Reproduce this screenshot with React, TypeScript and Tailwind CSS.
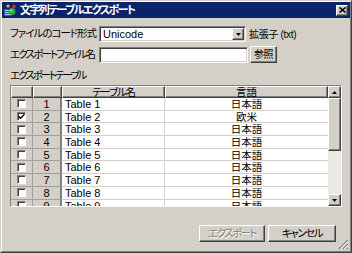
import React from "react";

const jp = "font-['Liberation_Sans','Noto_Sans_CJK_JP',sans-serif] [font-feature-settings:'palt']";

const raised =
  "border border-t-white border-l-white border-r-[#404040] border-b-[#404040] shadow-[inset_-1px_-1px_0_#808080] bg-[#d4d0c8]";
const sunken =
  "border border-t-[#808080] border-l-[#808080] border-r-white border-b-white shadow-[inset_1px_1px_0_#404040,inset_-1px_-1px_0_#d4d0c8]";

const ROWS = [
  { name: "Table 1", lang: "日本語", checked: false },
  { name: "Table 2", lang: "欧米", checked: true },
  { name: "Table 3", lang: "日本語", checked: false },
  { name: "Table 4", lang: "日本語", checked: false },
  { name: "Table 5", lang: "日本語", checked: false },
  { name: "Table 6", lang: "日本語", checked: false },
  { name: "Table 7", lang: "日本語", checked: false },
  { name: "Table 8", lang: "日本語", checked: false },
  { name: "Table 9", lang: "日本語", checked: false },
];

function TitleIcon() {
  return (
    <svg width="14" height="14" viewBox="0 0 14 14">
      <rect x="1" y="6" width="8" height="7" fill="#2a5cc8" />
      <rect x="2" y="7" width="6" height="1" fill="#a8c8ff" />
      <rect x="2" y="9" width="6" height="1" fill="#a8c8ff" />
      <rect x="2" y="11" width="6" height="1" fill="#a8c8ff" />
      <circle cx="9" cy="8.5" r="3.5" fill="#2fa84a" />
      <circle cx="8.2" cy="7.6" r="1.2" fill="#9be6a8" />
      <path d="M11 1l.7 1.6 1.6.3-1.2 1 .3 1.6-1.4-.8-1.4.8.3-1.6-1.2-1 1.6-.3z" fill="#e03030" />
      <circle cx="5" cy="3" r="1.6" fill="#f0c020" />
    </svg>
  );
}

function Checkbox({ checked }: { checked: boolean }) {
  return (
    <span className="flex h-[9px] w-[9px] items-center justify-center border border-t-[#808080] border-l-[#808080] border-r-white border-b-white bg-white shadow-[inset_1px_1px_0_#404040]">
      {checked && (
        <svg width="7" height="7" viewBox="0 0 7 7">
          <path d="M0.5 3.2l2 2 4-4" stroke="#000" strokeWidth="1.4" fill="none" />
        </svg>
      )}
    </span>
  );
}

function Arrow({ up }: { up?: boolean }) {
  return (
    <svg width="5" height="3" viewBox="0 0 5 3">
      <path d={up ? "M2.5 0L5 3H0z" : "M0 0h5L2.5 3z"} fill="#000" />
    </svg>
  );
}

export default function App() {
  return (
    <div className={`${jp} relative h-[253px] w-[352px] overflow-hidden border border-t-[#d4d0c8] border-l-[#d4d0c8] border-r-[#404040] border-b-[#404040] bg-[#d4d0c8] text-[11px] text-black`}>
      <div className="flex h-full flex-col border border-t-white border-l-white border-r-[#808080] border-b-[#808080]">
        {/* Title bar */}
        <div className="flex h-[16px] items-center bg-[#0a246a] pl-[1px] pr-[2px]">
          <TitleIcon />
          <span className="ml-[3px] text-[11px] font-bold leading-none tracking-[-1.6px] text-white">文字列テーブルエクスポート</span>
          <button className={`${raised} ml-auto flex h-[11px] w-[12px] items-center justify-center p-0`}>
            <svg width="7" height="6" viewBox="0 0 7 6">
              <path d="M0.5 0.5l6 5M6.5 0.5l-6 5" stroke="#000" strokeWidth="1.6" />
            </svg>
          </button>
        </div>

        <div className="flex flex-1 flex-col px-[8px]">
          {/* Encoding */}
          <div className="mt-[8px] flex h-[16px] items-center">
            <span className="w-[89px] whitespace-nowrap text-[10.5px] tracking-[-1px]">ファイルのコード形式</span>
            <div className={`${sunken} flex h-[16px] w-[147px] items-center bg-white pl-[3px]`}>
              <span>Unicode</span>
              <span className={`${raised} ml-auto mr-[1px] flex h-[12px] w-[12px] items-center justify-center`}>
                <Arrow />
              </span>
            </div>
            <span className="ml-[3px] whitespace-nowrap text-[10px] tracking-[-0.3px]">拡張子 (txt)</span>
          </div>

          {/* File name */}
          <div className="mt-[4px] flex h-[17px] items-center">
            <span className="w-[89px] whitespace-nowrap text-[10.5px] tracking-[-1.8px]">エクスポートファイル名</span>
            <div className={`${sunken} h-[16px] w-[149px] bg-white`} />
            <button className={`${raised} ml-[2px] flex h-[17px] w-[27px] items-center justify-center p-0 text-[10px] tracking-[-0.5px]`}>参照</button>
          </div>

          <div className="mt-[6px] h-[13px] text-[10.5px] leading-[13px] tracking-[-2px]">エクスポートテーブル</div>

          {/* Table */}
          <div className="mt-[3px] flex h-[122px] w-[332px] border border-t-[#808080] border-l-[#808080] border-r-white border-b-white">
            <div className="flex w-[317px] flex-col overflow-hidden bg-white">
              <div className="flex h-[12px] shrink-0 text-[10.5px] leading-[10px]">
                <div className={`${raised} w-[22px]`} />
                <div className={`${raised} w-[29px]`} />
                <div className={`${raised} w-[103px] text-center tracking-[-1.2px]`}>テーブル名</div>
                <div className={`${raised} w-[163px] text-center`}>言語</div>
              </div>
              {ROWS.map((r, i) => (
                <div key={r.name} className="flex h-[12.7px] shrink-0 leading-[12px]">
                  <div className="flex w-[22px] items-center justify-center border-b border-r border-b-[#a0a0a0] border-r-[#a0a0a0] bg-[#d4d0c8]">
                    <Checkbox checked={r.checked} />
                  </div>
                  <div className="w-[29px] border-b border-r-2 border-b-[#a0a0a0] border-r-[#808080] bg-[#d4d0c8] text-center text-black">
                    {i + 1}
                  </div>
                  <div className="w-[103px] border-b border-r border-b-[#d4d0c8] border-r-[#d4d0c8] pl-[3px]">{r.name}</div>
                  <div className="w-[163px] border-b border-b-[#d4d0c8] text-center text-[10.5px]">{r.lang}</div>
                </div>
              ))}
            </div>

            {/* Scrollbar */}
            <div className="flex w-[13px] flex-col bg-[#ebe9e4]">
              <div className={`${raised} flex h-[12px] shrink-0 items-center justify-center`}>
                <Arrow up />
              </div>
              <div className={`${raised} h-[53px] shrink-0`} />
              <div className="flex-1" />
              <div className={`${raised} flex h-[12px] shrink-0 items-center justify-center`}>
                <Arrow />
              </div>
            </div>
          </div>

          {/* Buttons */}
          <div className="mt-[18px] flex justify-end gap-[3px] pr-[6px] text-[10.5px] tracking-[-1.5px]">
            <button className={`${raised} h-[17px] w-[66px] p-0 text-[#808080] [text-shadow:1px_1px_0_#fff]`}>エクスポート</button>
            <button className={`${raised} h-[17px] w-[68px] p-0`}>キャンセル</button>
          </div>
        </div>
      </div>

      {/* Resize grip */}
      <svg className="absolute bottom-[2px] right-[2px]" width="11" height="11" viewBox="0 0 11 11">
        <path d="M10 1L1 10M10 5L5 10M10 9L9 10" stroke="#808080" strokeWidth="1.2" />
        <path d="M10 2L2 10M10 6L6 10" stroke="#fff" strokeWidth="0.8" />
      </svg>
    </div>
  );
}
